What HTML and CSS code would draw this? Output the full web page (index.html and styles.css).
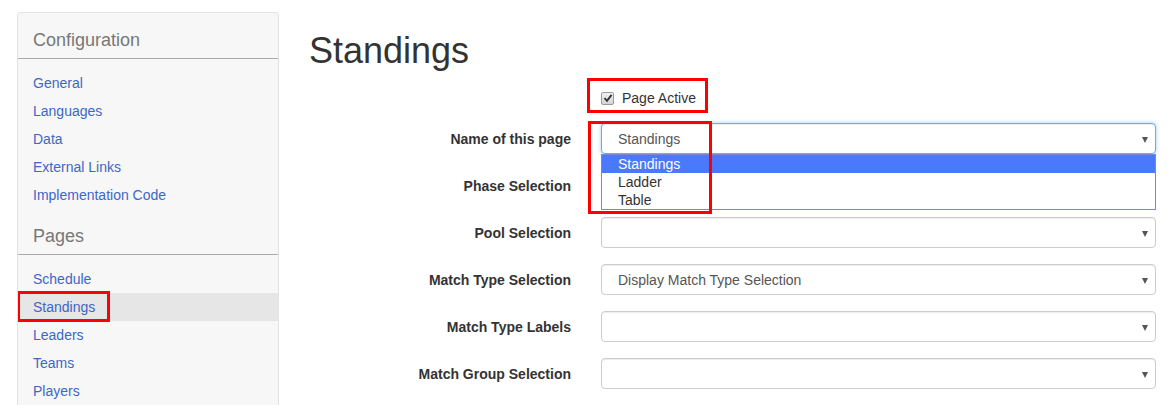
FILE: index.html
```html
<!DOCTYPE html>
<html>
<head>
<meta charset="utf-8">
<link rel="stylesheet" href="styles.css">
</head>
<body>
<div class="page">
  <aside class="sidebar">
    <h4 class="side-head">Configuration</h4>
    <ul class="side-list">
      <li><a>General</a></li>
      <li><a>Languages</a></li>
      <li><a>Data</a></li>
      <li><a>External Links</a></li>
      <li><a>Implementation Code</a></li>
    </ul>
    <h4 class="side-head">Pages</h4>
    <ul class="side-list">
      <li><a>Schedule</a></li>
      <li class="active"><a>Standings</a><span class="mark mark-side"></span></li>
      <li><a>Leaders</a></li>
      <li><a>Teams</a></li>
      <li><a>Players</a></li>
    </ul>
  </aside>
  <main class="main">
    <h1 class="title">Standings</h1>
    <div class="form">
      <div class="row check-row">
        <div></div>
        <label class="check">
          <span class="box"><svg width="10" height="10" viewBox="0 0 10 10"><path d="M1.5 5.2 L4 7.8 L8.6 1.8" fill="none" stroke="#333" stroke-width="1.9"/></svg></span>
          <span>Page Active</span>
          <span class="mark mark-check"></span>
        </label>
      </div>
      <div class="row">
        <div class="lbl">Name of this page</div>
        <div class="sel focus">
          <span class="val">Standings</span>
          <span class="arrow"></span>
          <div class="dropdown">
            <div class="opt on">Standings</div>
            <div class="opt">Ladder</div>
            <div class="opt">Table</div>
          </div>
          <span class="mark mark-sel"></span>
        </div>
      </div>
      <div class="row">
        <div class="lbl">Phase Selection</div>
        <div class="sel"><span class="val"></span><span class="arrow"></span></div>
      </div>
      <div class="row">
        <div class="lbl">Pool Selection</div>
        <div class="sel"><span class="val"></span><span class="arrow"></span></div>
      </div>
      <div class="row">
        <div class="lbl">Match Type Selection</div>
        <div class="sel"><span class="val">Display Match Type Selection</span><span class="arrow"></span></div>
      </div>
      <div class="row">
        <div class="lbl">Match Type Labels</div>
        <div class="sel"><span class="val"></span><span class="arrow"></span></div>
      </div>
      <div class="row last">
        <div class="lbl">Match Group Selection</div>
        <div class="sel"><span class="val"></span><span class="arrow"></span></div>
      </div>
    </div>
  </main>
</div>
</body>
</html>
```
FILE: styles.css
```css
* { box-sizing: border-box; }
html, body { margin: 0; padding: 0; background: #fff; overflow: hidden; }
body {
  font-family: "Liberation Sans", Arial, sans-serif;
  font-size: 14px;
  line-height: 20px;
  color: #333;
  width: 1171px;
  height: 405px;
}
.page { display: flex; align-items: flex-start; }

.sidebar {
  margin: 12px 0 0 17px;
  width: 262px;
  height: 393px;
  background: #f7f7f7;
  border: 1px solid #e3e3e3;
  border-bottom: 0;
  border-radius: 4px 4px 0 0;
  flex: none;
  overflow: hidden;
}
.side-head {
  margin: 0;
  padding: 17px 15px 8px;
  font-size: 18px;
  font-weight: normal;
  line-height: 20px;
  color: #777;
  border-bottom: 1px solid #ababab;
}
.side-list { list-style: none; margin: 10px 0 0; padding: 0; }
.side-list li { position: relative; padding: 4px 15px; line-height: 20px; }
.side-list a { color: #3d67c6; }
.side-list li.active { background: #e6e6e6; }

.mark { position: absolute; border: 3px solid #f00; pointer-events: none; }
.mark-side { left: -1px; top: -2px; width: 93px; height: 31px; }
.mark-check { left: -14px; top: -10px; width: 121px; height: 35px; }
.mark-sel { left: -14px; top: -3px; width: 124px; height: 93px; z-index: 3; }

.main { flex: 1; padding: 0 15px 0 30px; }
.title {
  margin: 31px 0 0;
  font-size: 36px;
  font-weight: normal;
  line-height: 40px;
  color: #333;
}
.form { margin-top: 17px; }
.row {
  display: grid;
  grid-template-columns: 262px 1fr;
  column-gap: 30px;
  align-items: center;
  margin-bottom: 16px;
}
.row.last { margin-bottom: 0; }
.check-row { margin-bottom: 15px; }
.check {
  position: relative;
  display: flex;
  align-items: center;
  gap: 8px;
  line-height: 20px;
  justify-self: start;
}
.box {
  width: 13px; height: 13px;
  border: 1px solid #9a9a9a;
  border-radius: 2px;
  background: linear-gradient(#f1f1f1, #d4d4d4);
  display: flex; align-items: center; justify-content: center;
}
.lbl { text-align: right; font-weight: bold; color: #333; padding-top: 1px; }
.sel {
  position: relative;
  height: 31px;
  border: 1px solid #ccc;
  border-radius: 4px;
  background: #fff;
  box-shadow: inset 0 1px 1px rgba(0,0,0,.075);
  display: flex;
  align-items: center;
  padding-left: 16px;
  color: #555;
}
.sel.focus {
  border-color: #66afe9;
  box-shadow: inset 0 1px 1px rgba(0,0,0,.075), 0 0 4px rgba(102,175,233,.6);
  z-index: 2;
}
.arrow {
  position: absolute;
  right: 7px; top: 13px;
  width: 0; height: 0;
  border-left: 3px solid transparent;
  border-right: 3px solid transparent;
  border-top: 6px solid #555;
}
.dropdown {
  position: absolute;
  left: -1px; right: -1px; top: 30px;
  background: #fff;
  border: 1px solid #7d84d6;
  z-index: 2;
}
.opt { height: 18px; line-height: 18px; padding-left: 16px; color: #333; }
.opt.on { background: #4a79fd; color: #fff; }
```
